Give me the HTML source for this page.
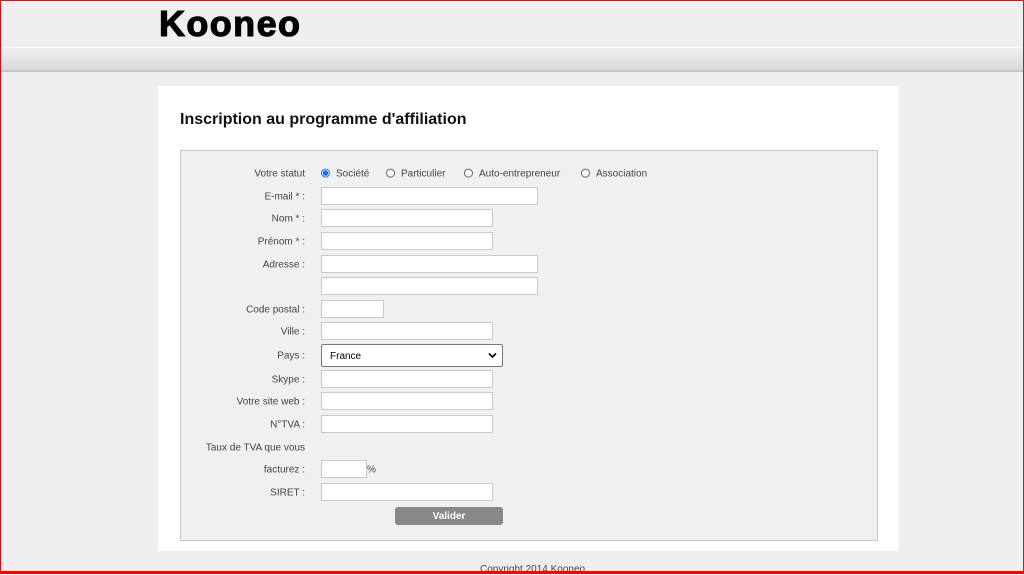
<!DOCTYPE html>
<html><head><meta charset="utf-8"><style>
*{margin:0;padding:0;box-sizing:border-box}
body{width:1024px;height:574px;overflow:hidden;background:#efefef;font-family:"Liberation Sans",sans-serif;position:relative}
.frame{position:absolute;left:0;top:0;width:1024px;height:572px;border:1px solid #f00;border-bottom:none;z-index:5;pointer-events:none}
.hdr{position:absolute;left:0;top:0;width:1024px;height:47px;background:#efefef}
.logo{position:absolute;left:159px;top:3px;font:bold 36px "Liberation Sans",sans-serif;letter-spacing:1.4px;color:#000;-webkit-text-stroke:1.1px #000}
.band{position:absolute;left:0;top:47px;width:1024px;height:25px;border-top:1px solid #fff;background:linear-gradient(#efefef,#dadada);border-bottom:2px solid #c8c8c8}
.panel{position:absolute;left:158px;top:86px;width:741px;height:465px;background:#fff}
h1{position:absolute;left:180px;top:111px;font:bold 16px "Liberation Sans",sans-serif;color:#111}
.box{position:absolute;left:180px;top:150px;width:698px;height:391px;background:#f0f0f0;border:1px solid #c8c8c8}
.l{position:absolute;right:719px;font-size:10px;color:#444;transform:translateY(-40%);white-space:nowrap}
.i{position:absolute;left:321px;height:18px;background:#fff;border:1px solid #c9c9c9;transform:translateY(-50%)}
.r{position:absolute;font-size:10px;color:#444;transform:translateY(-40%);white-space:nowrap}
.rd{display:inline-block;width:9px;height:9px;border:1px solid #666;border-radius:50%;vertical-align:-1px;margin-right:6px;background:#fff}
.rd.on{border-color:#1a73e8;background:radial-gradient(#1a73e8 0 2.5px,#fff 3px)}
.sel{position:absolute;left:321px;top:344px;width:182px;height:23px;background:#fff;border:1px solid #777;border-radius:2px;font-size:10px;padding:6px 8px;color:#000}
.btn{position:absolute;left:395px;top:507px;width:108px;height:18px;background:#888;border-radius:3px;color:#fff;font:bold 10px "Liberation Sans",sans-serif;text-align:center;line-height:19px}
.foot{position:absolute;left:480px;top:564px;font-size:10px;color:#444}
.bot{position:absolute;left:0;top:571px;width:1024px;height:3px;background:#f00}
</style></head><body>
<div class="frame"></div>
<div class="hdr"></div><div class="logo">Kooneo</div>
<div class="band"></div>
<div class="panel"></div>
<h1>Inscription au programme d'affiliation</h1>
<div class="box"></div>
<div class="l" style="top:173px">Votre statut</div>
<div class="r" style="left:321px;top:173px"><span class="rd on"></span>Société</div>
<div class="r" style="left:386px;top:173px"><span class="rd"></span>Particulier</div>
<div class="r" style="left:464px;top:173px"><span class="rd"></span>Auto-entrepreneur</div>
<div class="r" style="left:581px;top:173px"><span class="rd"></span>Association</div>
<div class="l" style="top:196px">E-mail * :</div><div class="i" style="top:196px;width:217px"></div>
<div class="l" style="top:218px">Nom * :</div><div class="i" style="top:218px;width:172px"></div>
<div class="l" style="top:241px">Prénom * :</div><div class="i" style="top:241px;width:172px"></div>
<div class="l" style="top:264px">Adresse :</div><div class="i" style="top:264px;width:217px"></div>
<div class="i" style="top:286px;width:217px"></div>
<div class="l" style="top:309px">Code postal :</div><div class="i" style="top:309px;width:63px"></div>
<div class="l" style="top:331px">Ville :</div><div class="i" style="top:331px;width:172px"></div>
<div class="l" style="top:355px">Pays :</div><div class="sel">France<svg style="position:absolute;right:5px;top:7px" width="9" height="7" viewBox="0 0 9 7"><path d="M1 1.5l3.5 3.5L8 1.5" fill="none" stroke="#000" stroke-width="1.6"/></svg></div>
<div class="l" style="top:379px">Skype :</div><div class="i" style="top:379px;width:172px"></div>
<div class="l" style="top:401px">Votre site web :</div><div class="i" style="top:401px;width:172px"></div>
<div class="l" style="top:424px">N°TVA :</div><div class="i" style="top:424px;width:172px"></div>
<div class="l" style="top:447px">Taux de TVA que vous</div>
<div class="l" style="top:469px">facturez :</div><div class="i" style="top:469px;width:46px"></div>
<div class="r" style="left:367px;top:469px">%</div>
<div class="l" style="top:492px">SIRET :</div><div class="i" style="top:492px;width:172px"></div>
<div class="btn">Valider</div>
<div class="foot">Copyright 2014 Kooneo</div>
<div class="bot"></div>
</body></html>
